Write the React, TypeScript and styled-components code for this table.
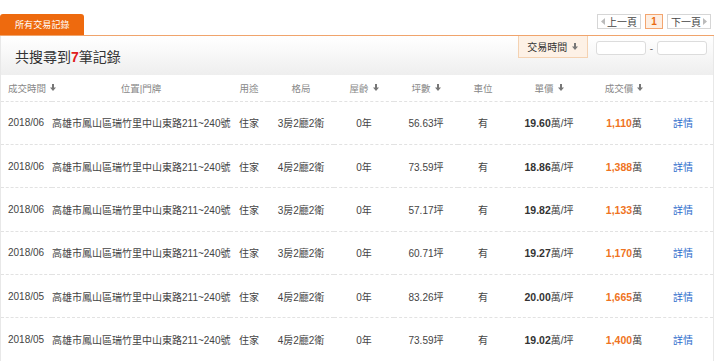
import React from "react";
import styled, { createGlobalStyle } from "styled-components";

const GlobalStyle = createGlobalStyle`
  html, body { margin: 0; padding: 0; background: #fff; }
  body { font-family: "Liberation Sans", "Noto Sans CJK TC", sans-serif; color: #444; }
  * { box-sizing: border-box; }
`;

const Wrapper = styled.div`
  width: 714px;
  padding-top: 14px;
`;

const TopBar = styled.div`
  display: flex;
  justify-content: space-between;
  align-items: flex-end;
  border-bottom: 1px solid #f0a46c;
`;

const Tab = styled.div`
  width: 84px;
  height: 21px;
  background: #ee6a0e;
  border-radius: 3px 3px 0 0;
  color: #fff;
  font-size: 9px;
  display: flex;
  align-items: center;
  padding-left: 15px;
  letter-spacing: 0.1px;
`;

const Pager = styled.div`
  display: flex;
  gap: 4px;
  margin-bottom: 6px;
  margin-right: 3px;
`;

const PageBtn = styled.div<{ $active?: boolean }>`
  height: 15px;
  display: flex;
  align-items: center;
  gap: 2px;
  padding: 0 ${(p) => (p.$active ? "5px" : "3px")};
  border: 1px solid ${(p) => (p.$active ? "#f3a56f" : "#d6d6d6")};
  background: ${(p) => (p.$active ? "#fdeee2" : "#fff")};
  color: ${(p) => (p.$active ? "#ea6a10" : "#444")};
  font-weight: ${(p) => (p.$active ? 700 : 400)};
  font-size: 10px;
  min-width: ${(p) => (p.$active ? "18px" : "43px")};
  justify-content: center;
`;

const Panel = styled.div`
  border-left: 1px solid #e8e8e8;
  border-right: 1px solid #e8e8e8;
`;

const Header = styled.div`
  height: 39px;
  display: flex;
  align-items: flex-start;
  background: linear-gradient(#ffffff 0%, #f8f8f8 45%, #eeeeee 100%);
`;

const Title = styled.h1`
  margin: 0;
  padding: 13px 0 0 14px;
  font-size: 14px;
  font-weight: 400;
  color: #333;
  line-height: 16px;
  flex: 1;
`;

const Count = styled.span`
  color: #e02020;
  font-weight: 700;
`;

const SortBox = styled.div`
  width: 70px;
  height: 22px;
  background: #fdf1e6;
  border: 1px solid #f4d2b2;
  border-top: none;
  font-size: 10px;
  color: #333;
  display: flex;
  align-items: center;
  justify-content: center;
  gap: 5px;
`;

const RangeBox = styled.div`
  display: flex;
  align-items: center;
  gap: 4px;
  padding: 5px 6px 0 8px;
  font-size: 10px;
  color: #666;
`;

const DateInput = styled.input`
  width: 50px;
  height: 14px;
  border: 1px solid #dcdcdc;
  border-radius: 3px;
  background: #fff;
  padding: 0;
`;

const Table = styled.table`
  width: 100%;
  border-collapse: collapse;
  table-layout: fixed;
`;

const Th = styled.th<{ $left?: boolean }>`
  height: 26px;
  font-weight: 400;
  font-size: 9.5px;
  color: #888;
  text-align: ${(p) => (p.$left ? "left" : "center")};
  padding: 0 0 0 ${(p) => (p.$left ? "7px" : "0")};
  border-bottom: 1px dashed #e2e2e2;
  white-space: nowrap;
`;

const HeadInner = styled.span`
  display: inline-flex;
  align-items: center;
  gap: 4px;
`;

const Row = styled.tr`
  height: 43.4px;
  border-bottom: 1px dashed #e2e2e2;
`;

const Td = styled.td<{ $left?: boolean }>`
  font-size: 10px;
  color: #444;
  text-align: ${(p) => (p.$left ? "left" : "center")};
  padding: 0 0 0 ${(p) => (p.$left ? "7px" : "0")};
  white-space: nowrap;
`;

const Strong = styled.b`
  color: #333;
  font-weight: 700;
  font-size: 10.5px;
`;

const Price = styled.b`
  color: #ef7322;
  font-weight: 700;
  font-size: 10.5px;
`;

const Link = styled.a`
  color: #2d6ccb;
  text-decoration: none;
  padding-right: 5px;
`;

const Arrow = () => (
  <svg width="6" height="7" viewBox="0 0 6 7">
    <path d="M2 0h2v3.5h2L3 7 0 3.5h2z" fill="#777" />
  </svg>
);

const Tri = ({ dir }: { dir: "l" | "r" }) => (
  <svg width="4" height="7" viewBox="0 0 4 7">
    <path d={dir === "l" ? "M4 0v7L0 3.5z" : "M0 0v7l4-3.5z"} fill="#bbb" />
  </svg>
);

type Rec = { d: string; lay: string; area: string; unit: string; total: string };

const rows: Rec[] = [
  { d: "2018/06", lay: "3房2廳2衛", area: "56.63", unit: "19.60", total: "1,110" },
  { d: "2018/06", lay: "4房2廳2衛", area: "73.59", unit: "18.86", total: "1,388" },
  { d: "2018/06", lay: "3房2廳2衛", area: "57.17", unit: "19.82", total: "1,133" },
  { d: "2018/06", lay: "3房2廳2衛", area: "60.71", unit: "19.27", total: "1,170" },
  { d: "2018/05", lay: "4房2廳2衛", area: "83.26", unit: "20.00", total: "1,665" },
  { d: "2018/05", lay: "4房2廳2衛", area: "73.59", unit: "19.02", total: "1,400" },
];

const cols = [51, 178, 38, 66, 60, 64, 50, 82, 68, 55];

export default function App() {
  return (
    <>
      <GlobalStyle />
      <Wrapper>
        <TopBar>
          <Tab>所有交易記錄</Tab>
          <Pager>
            <PageBtn>
              <Tri dir="l" />
              上一頁
            </PageBtn>
            <PageBtn $active>1</PageBtn>
            <PageBtn>
              下一頁
              <Tri dir="r" />
            </PageBtn>
          </Pager>
        </TopBar>
        <Panel>
          <Header>
            <Title>
              共搜尋到<Count>7</Count>筆記錄
            </Title>
            <SortBox>
              交易時間 <Arrow />
            </SortBox>
            <RangeBox>
              <DateInput />
              <span>-</span>
              <DateInput />
            </RangeBox>
          </Header>
          <Table>
            <colgroup>
              {cols.map((w, i) => (
                <col key={i} style={{ width: w }} />
              ))}
            </colgroup>
            <thead>
              <tr>
                <Th $left>
                  <HeadInner>
                    成交時間 <Arrow />
                  </HeadInner>
                </Th>
                <Th>位置|門牌</Th>
                <Th>用途</Th>
                <Th>格局</Th>
                <Th>
                  <HeadInner>
                    屋齡 <Arrow />
                  </HeadInner>
                </Th>
                <Th>
                  <HeadInner>
                    坪數 <Arrow />
                  </HeadInner>
                </Th>
                <Th>車位</Th>
                <Th>
                  <HeadInner>
                    單價 <Arrow />
                  </HeadInner>
                </Th>
                <Th>
                  <HeadInner>
                    成交價 <Arrow />
                  </HeadInner>
                </Th>
                <Th></Th>
              </tr>
            </thead>
            <tbody>
              {rows.map((r, i) => (
                <Row key={i}>
                  <Td $left>{r.d}</Td>
                  <Td>高雄市鳳山區瑞竹里中山東路211~240號</Td>
                  <Td>住家</Td>
                  <Td>{r.lay}</Td>
                  <Td>0年</Td>
                  <Td>{r.area}坪</Td>
                  <Td>有</Td>
                  <Td>
                    <Strong>{r.unit}</Strong>萬/坪
                  </Td>
                  <Td>
                    <Price>{r.total}</Price>萬
                  </Td>
                  <Td>
                    <Link href="#">詳情</Link>
                  </Td>
                </Row>
              ))}
            </tbody>
          </Table>
        </Panel>
      </Wrapper>
    </>
  );
}
